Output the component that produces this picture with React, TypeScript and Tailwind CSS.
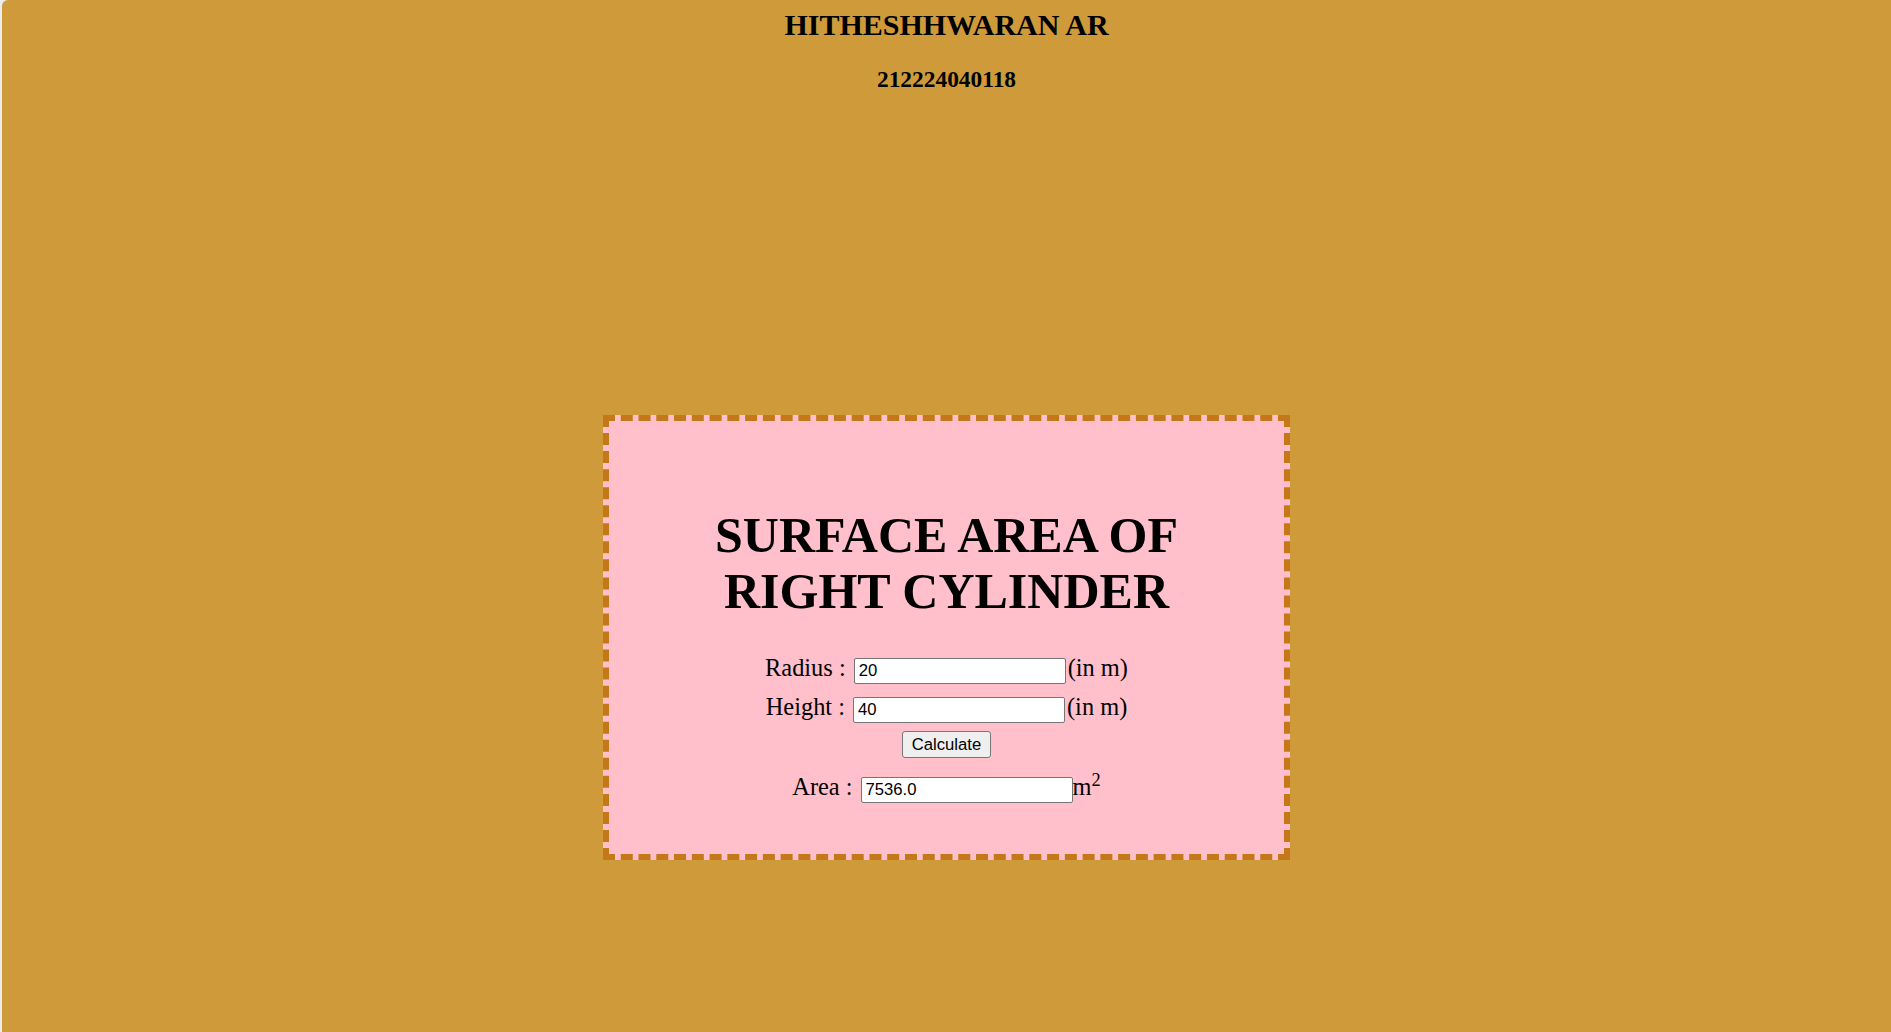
import { useState } from "react";

export default function App() {
    const [radius, setRadius] = useState("20");
    const [height, setHeight] = useState("40");
    const [area, setArea] = useState("7536.0");

    const calculate = () => {
        const r = parseFloat(radius);
        const h = parseFloat(height);
        if (isNaN(r) || isNaN(h)) return;
        setArea((2 * 3.14 * r * (r + h)).toFixed(1));
    };

    const inputCls =
        "w-[212px] h-[26px] border border-[#767676] rounded-[2px] bg-white px-[4px] text-[16.67px] text-black font-['Liberation_Sans',Arial,sans-serif] outline-none";

    return (
        <div className="min-h-screen bg-[#ececec]">
            <div className="ml-[2px] min-h-[1032px] overflow-hidden rounded-tl-[6px] bg-[#CF9A3A] font-['Liberation_Serif','Times_New_Roman',serif] text-black">
                <h2 className="pt-[8px] text-center text-[30px] font-bold leading-[1.15]">HITHESHHWARAN AR</h2>
                <h3 className="mt-[23px] text-center text-[23.4px] font-bold leading-[1.15]">212224040118</h3>

                <div className="mx-auto mt-[323px] h-[445px] w-[687px] border-[6px] border-dashed border-[#C4781A] bg-[#FFC0CB]">
                    <h1 className="mx-auto mt-[86px] w-[480px] text-center text-[50px] font-bold leading-[56px]">
                        SURFACE AREA OF RIGHT CYLINDER
                    </h1>

                    <div className="mt-[35px] flex items-baseline justify-center text-[24.4px] leading-[1.15]">
                        <span className="mr-[8px]">Radius :</span>
                        <input className={inputCls} value={radius} onChange={(e) => setRadius(e.target.value)} />
                        <span className="ml-[2px]">(in m)</span>
                    </div>
                    <div className="mt-[9px] flex items-baseline justify-center text-[24.4px] leading-[1.15]">
                        <span className="mr-[8px]">Height :</span>
                        <input className={inputCls} value={height} onChange={(e) => setHeight(e.target.value)} />
                        <span className="ml-[2px]">(in m)</span>
                    </div>
                    <div className="mt-[8px] flex justify-center">
                        <button
                            onClick={calculate}
                            className="h-[27px] w-[89px] rounded-[3px] border border-[#767676] bg-[#efefef] text-[16.67px] font-['Liberation_Sans',Arial,sans-serif] text-black"
                        >
                            Calculate
                        </button>
                    </div>
                    <div className="mt-[15px] flex items-baseline justify-center text-[24.4px] leading-[1.15]">
                        <span className="mr-[8px]">Area :</span>
                        <input className={inputCls} value={area} readOnly />
                        <span>
                            m<sup>2</sup>
                        </span>
                    </div>
                </div>
            </div>
        </div>
    );
}
